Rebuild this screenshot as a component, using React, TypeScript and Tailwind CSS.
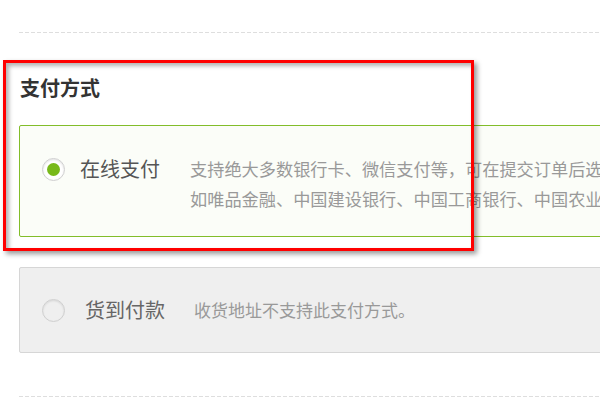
import React from "react";

export default function App() {
  const dash =
    "h-px bg-[repeating-linear-gradient(90deg,#dedede_0px,#dedede_4px,transparent_4px,transparent_6px)]";
  return (
    <div
      className="relative w-[600px] h-[400px] overflow-hidden bg-white"
      style={{ fontFamily: '"Noto Sans CJK SC", "Noto Sans", sans-serif' }}
    >
      <div className="w-[800px] pl-[19px] pt-[32px]">
        <div className={dash} />
        <div className="mt-[40px] text-[20px] leading-[30px] font-bold text-[#333] pl-px">
          支付方式
        </div>
        <div className="mt-[22px] h-[112px] rounded-[2px] border border-[#82bd2a] bg-[#fbfdf8] pt-[28px] pl-[22px] flex items-start">
          <div className="flex h-[30px] items-center">
            <div className="flex h-[23px] w-[23px] items-center justify-center rounded-full border border-[#cfcfcf] bg-white shadow-[inset_0_1px_2px_rgba(0,0,0,0.12)]">
              <div className="h-[13px] w-[13px] rounded-full bg-[#78b91a]" />
            </div>
          </div>
          <div className="ml-[15px] text-[20px] leading-[30px] text-[#555]">在线支付</div>
          <div className="ml-[30px] text-[17.2px] leading-[30px] text-[#999] whitespace-nowrap">
            <div>支持绝大多数银行卡、微信支付等，可在提交订单后选择</div>
            <div>如唯品金融、中国建设银行、中国工商银行、中国农业银行</div>
          </div>
        </div>
        <div className="mt-[30px] h-[86px] rounded-[2px] border border-[#d6d6d6] bg-[#efefef] pl-[22px] flex items-center">
          <div className="h-[23px] w-[23px] rounded-full border border-[#cfcfcf] bg-[#efefef] shadow-[inset_0_1px_2px_rgba(0,0,0,0.1)]" />
          <div className="ml-[20px] text-[20px] leading-[30px] text-[#666]">货到付款</div>
          <div className="ml-[29px] text-[17px] leading-[30px] text-[#999]">收货地址不支持此支付方式。</div>
        </div>
        <div className={`mt-[43px] ${dash}`} />
      </div>
      <div className="absolute left-[3px] top-[60px] h-[191px] w-[471px] border-[3px] border-[#ff0000] shadow-[3px_3px_5px_rgba(0,0,0,0.4),inset_3px_3px_4px_rgba(0,0,0,0.3)]" />
    </div>
  );
}
